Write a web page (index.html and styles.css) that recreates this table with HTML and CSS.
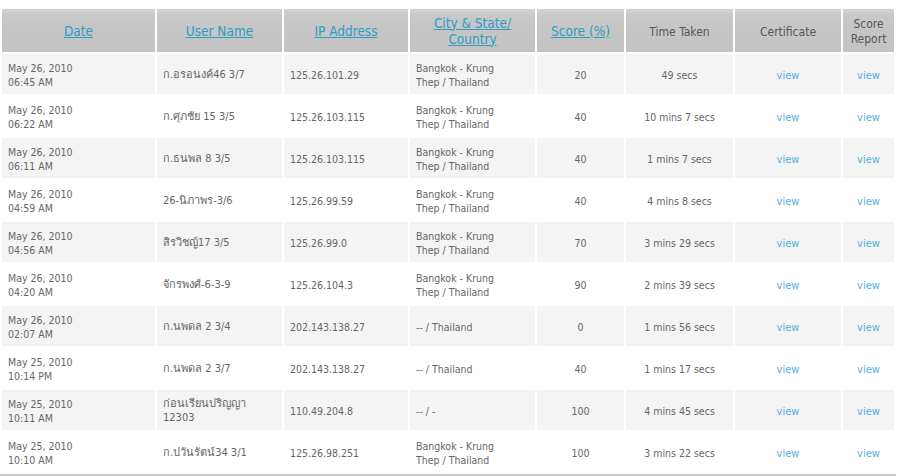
FILE: index.html
```html
<!DOCTYPE html>
<html>
<head>
<meta charset="utf-8">
<link rel="stylesheet" href="styles.css">
</head>
<body>
<table class="results">
  <colgroup>
    <col class="c-date"><col class="c-user"><col class="c-ip"><col class="c-city">
    <col class="c-score"><col class="c-time"><col class="c-cert"><col class="c-rep">
  </colgroup>
  <thead>
    <tr>
      <th><a href="#">Date</a></th>
      <th><a href="#">User Name</a></th>
      <th><a href="#">IP Address</a></th>
      <th><a href="#">City &amp; State/ Country</a></th>
      <th><a href="#">Score (%)</a></th>
      <th class="plain">Time Taken</th>
      <th class="plain">Certificate</th>
      <th class="plain">Score Report</th>
    </tr>
  </thead>
  <tbody>
    <tr><td><span class="d">May 26, 2010</span><span class="d">06:45 AM</span></td><td class="user">ก.อรอนงค์46 3/7</td><td>125.26.101.29</td><td class="city">Bangkok - Krung Thep / Thailand</td><td class="ctr">20</td><td class="ctr">49 secs</td><td class="ctr"><a class="view" href="#">view</a></td><td class="ctr"><a class="view" href="#">view</a></td></tr>
    <tr><td><span class="d">May 26, 2010</span><span class="d">06:22 AM</span></td><td class="user">ก.ศุภชัย 15 3/5</td><td>125.26.103.115</td><td class="city">Bangkok - Krung Thep / Thailand</td><td class="ctr">40</td><td class="ctr">10 mins 7 secs</td><td class="ctr"><a class="view" href="#">view</a></td><td class="ctr"><a class="view" href="#">view</a></td></tr>
    <tr><td><span class="d">May 26, 2010</span><span class="d">06:11 AM</span></td><td class="user">ก.ธนพล 8 3/5</td><td>125.26.103.115</td><td class="city">Bangkok - Krung Thep / Thailand</td><td class="ctr">40</td><td class="ctr">1 mins 7 secs</td><td class="ctr"><a class="view" href="#">view</a></td><td class="ctr"><a class="view" href="#">view</a></td></tr>
    <tr><td><span class="d">May 26, 2010</span><span class="d">04:59 AM</span></td><td class="user">26-นิภาพร-3/6</td><td>125.26.99.59</td><td class="city">Bangkok - Krung Thep / Thailand</td><td class="ctr">40</td><td class="ctr">4 mins 8 secs</td><td class="ctr"><a class="view" href="#">view</a></td><td class="ctr"><a class="view" href="#">view</a></td></tr>
    <tr><td><span class="d">May 26, 2010</span><span class="d">04:56 AM</span></td><td class="user">สิรวิชญ์17 3/5</td><td>125.26.99.0</td><td class="city">Bangkok - Krung Thep / Thailand</td><td class="ctr">70</td><td class="ctr">3 mins 29 secs</td><td class="ctr"><a class="view" href="#">view</a></td><td class="ctr"><a class="view" href="#">view</a></td></tr>
    <tr><td><span class="d">May 26, 2010</span><span class="d">04:20 AM</span></td><td class="user">จักรพงศ์-6-3-9</td><td>125.26.104.3</td><td class="city">Bangkok - Krung Thep / Thailand</td><td class="ctr">90</td><td class="ctr">2 mins 39 secs</td><td class="ctr"><a class="view" href="#">view</a></td><td class="ctr"><a class="view" href="#">view</a></td></tr>
    <tr><td><span class="d">May 26, 2010</span><span class="d">02:07 AM</span></td><td class="user">ก.นพดล 2 3/4</td><td>202.143.138.27</td><td class="city">-- / Thailand</td><td class="ctr">0</td><td class="ctr">1 mins 56 secs</td><td class="ctr"><a class="view" href="#">view</a></td><td class="ctr"><a class="view" href="#">view</a></td></tr>
    <tr><td><span class="d">May 25, 2010</span><span class="d">10:14 PM</span></td><td class="user">ก.นพดล 2 3/7</td><td>202.143.138.27</td><td class="city">-- / Thailand</td><td class="ctr">40</td><td class="ctr">1 mins 17 secs</td><td class="ctr"><a class="view" href="#">view</a></td><td class="ctr"><a class="view" href="#">view</a></td></tr>
    <tr><td><span class="d">May 25, 2010</span><span class="d">10:11 AM</span></td><td class="user">ก่อนเรียนปริญญา 12303</td><td>110.49.204.8</td><td class="city">-- / -</td><td class="ctr">100</td><td class="ctr">4 mins 45 secs</td><td class="ctr"><a class="view" href="#">view</a></td><td class="ctr"><a class="view" href="#">view</a></td></tr>
    <tr><td><span class="d">May 25, 2010</span><span class="d">10:10 AM</span></td><td class="user">ก.ปวันรัตน์34 3/1</td><td>125.26.98.251</td><td class="city">Bangkok - Krung Thep / Thailand</td><td class="ctr">100</td><td class="ctr">3 mins 22 secs</td><td class="ctr"><a class="view" href="#">view</a></td><td class="ctr"><a class="view" href="#">view</a></td></tr>
  </tbody>
</table>
</body>
</html>
```

FILE: styles.css
```css
html, body {
  margin: 0;
  padding: 0;
  background: #ffffff;
}
body {
  padding-top: 7px;
  font-family: "DejaVu Sans Condensed", "Liberation Sans", "Noto Sans", sans-serif;
}
.results {
  width: 896px;
  table-layout: fixed;
  border-collapse: separate;
  border-spacing: 2px;
  border-bottom: 2px solid #cbcbcb;
}
.c-date { width: 153px; }
.c-user { width: 125px; }
.c-ip { width: 124px; }
.c-city { width: 125px; }
.c-score { width: 87px; }
.c-time { width: 107px; }
.c-cert { width: 106px; }
.c-rep { width: 51px; }

.results th {
  height: 43px;
  padding: 0 2px;
  background: linear-gradient(to bottom, #d3d3d3 0, #c7c7c7 9px, #c3c3c3 100%);
  font-weight: normal;
  text-align: center;
  vertical-align: middle;
  font-size: 13.5px;
  line-height: 16px;
  color: #555555;
}
.results th a {
  color: #2f9cc7;
  text-decoration: underline;
}
.results th.plain {
  height: 40px;
  padding-top: 3px;
  font-size: 12px;
  line-height: 15px;
  color: #585858;
}
.results td {
  height: 38px;
  padding: 2px 6px 0;
  vertical-align: middle;
  font-size: 10.5px;
  line-height: 14px;
  color: #666666;
}
.results tbody tr:nth-child(odd) td {
  background: #f4f4f4;
}
.results td.user {
  font-size: 11px;
}
.results td.city {
  padding-right: 23px;
}
.results td.ctr {
  text-align: center;
}
.d {
  display: block;
}
.view {
  color: #55aedb;
  text-decoration: none;
  font-size: 11px;
}
```
